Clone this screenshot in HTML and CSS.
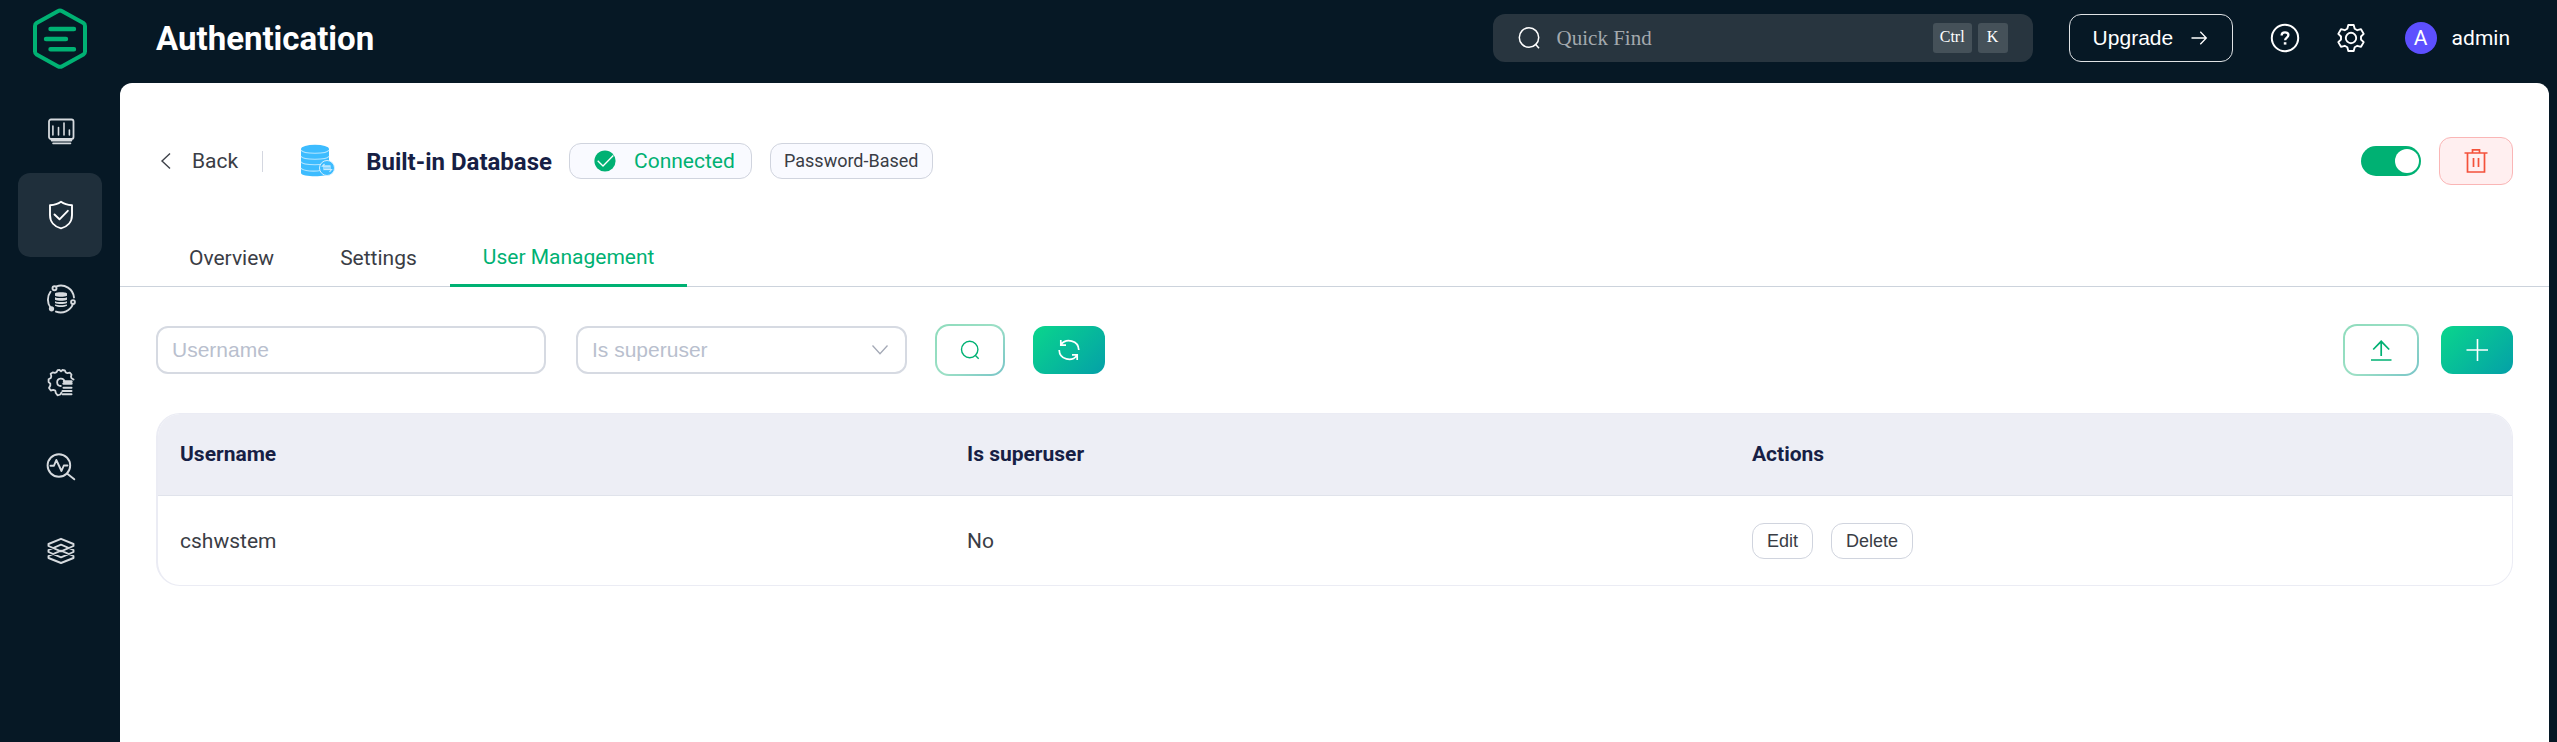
FILE: index.html
```html
<!DOCTYPE html>
<html lang="en">
<head>
<meta charset="utf-8">
<title>Authentication</title>
<link rel="stylesheet" href="styles.css">
</head>
<body>
<div class="app">
  <aside class="sidebar">
    <a class="logo">
      <svg width="56" height="62" viewBox="0 0 56 62" fill="none" stroke="#00b173" stroke-width="4" stroke-linejoin="round" stroke-linecap="round">
        <path d="M25.8 3.2 4.6 15Q3 16 3 18V43.500Q3 45.500 4.600 46.500L25.800 58.200Q28 59.400 30.200 58.200L51.400 46.500Q53 45.500 53 43.500V18Q53 16 51.400 15L30.200 3.200Q28 2 25.800 3.200Z"/>
        <path d="M18.500 21H42M14 31H34M18.500 41.300H42" stroke-width="4.400"/>
      </svg>
    </a>
    <nav class="menu">
      <a class="menu-item">
        <svg width="30" height="30" viewBox="0 0 30 30" fill="none" stroke="#d6dade" stroke-width="1.800" stroke-linecap="round">
          <rect x="3" y="3.500" width="24.500" height="19.500" rx="2"/>
          <path d="M6.900 10V19M12.500 11.500V19M18 7V19M23.400 14V19M5.500 24.600H25.500M7 27.400H24.500" stroke-width="1.600"/>
        </svg>
      </a>
      <a class="menu-item active">
        <svg width="30" height="30" viewBox="0 0 30 30" fill="none" stroke="#fff" stroke-width="1.900" stroke-linejoin="round" stroke-linecap="round">
          <path d="M15 1.800C12 4 8 5 4 5.200V15C4 22 8.500 26.800 15 28.400C21.500 26.800 26 22 26 15V5.200C22 5 18 4 15 1.800Z"/>
          <path d="M8.500 14.500 13.500 19.300 21.800 10.800"/>
        </svg>
      </a>
      <a class="menu-item">
        <svg width="30" height="30" viewBox="0 0 30 30" fill="none" stroke="#d6dade" stroke-width="1.900" stroke-linecap="round">
          <path d="M10.500 2.300A13.200 13.200 0 0 1 28 13.500M27 20A13.200 13.200 0 0 1 10 27.600M4.500 23.500A13.200 13.200 0 0 1 4.500 7.800"/>
          <circle cx="8.500" cy="4.300" r="2"/><circle cx="27" cy="18" r="1.900"/><circle cx="5.500" cy="24.800" r="1.700" fill="#d6dade"/>
          <g fill="#d6dade" stroke="none"><path d="M9 9.500C9 7.800 21 7.800 21 9.500V11.700C18 13 12 13 9 11.700ZM9 13.200C12 14.400 18 14.400 21 13.200V15.700C18 17 12 17 9 15.700ZM9 17.200C12 18.400 18 18.400 21 17.200V19C18 20.300 12 20.300 9 19ZM9 20.400C12 21.500 18 21.500 21 20.400V21.800C18 23.500 12 23.500 9 21.800Z"/></g>
        </svg>
      </a>
      <a class="menu-item">
        <svg width="30" height="30" viewBox="0 0 30 30" fill="none" stroke="#d6dade" stroke-width="1.800" stroke-linejoin="round" stroke-linecap="round">
          <path d="M15.500 24.500 14.300 26.500 11.500 27.300 9.800 25 9.300 22.600 7.300 21.900 4.800 22.500 3 20 4.300 17.500 4.300 15.600 2.600 14 2.600 11.300 4.800 10 5.300 8 4.600 5.800 6.700 4.400 8.800 4.900 10.600 4.200 11.600 2.200 13.500 2 15 3.400 16.500 2 18.800 2.400 19.700 4.400 21.500 5.200 23.800 4.700 25.500 6.500 25 8.800 25.500 10.300 27.600 11.500"/>
          <path d="M14.800 18A3.700 3.700 0 1 1 18.500 13.600"/>
          <path d="M18 13.500H25.500M17.500 15.600H25.500" stroke-width="2.400"/>
          <path d="M17.500 19.700H25.500M16.500 23H25.500M16.500 26.300H25.500" stroke-width="2"/>
        </svg>
      </a>
      <a class="menu-item">
        <svg width="30" height="30" viewBox="0 0 30 30" fill="none" stroke="#d6dade" stroke-width="1.900" stroke-linejoin="round" stroke-linecap="round">
          <circle cx="12.900" cy="13.500" r="11.300"/>
          <path d="M21 21.500 28.300 27.300M4.500 13.700H8L10.300 8 15.500 19 17.800 13.500H21.500" />
        </svg>
      </a>
      <a class="menu-item">
        <svg width="30" height="30" viewBox="0 0 30 30" fill="none" stroke="#d6dade" stroke-width="1.900" stroke-linejoin="round">
          <path d="M15 2.800 27.500 8V10L15 15.400 2.500 10V8ZM15 8.700 27.500 14V16L15 21.300 2.500 16V14ZM15 14.700 27.500 20V22L15 27 2.500 22V20Z"/>
        </svg>
      </a>
    </nav>
  </aside>

  <div class="column">
    <header class="topbar">
      <h1 class="page-name">Authentication</h1>
      <div class="topbar-right">
        <div class="quick-find">
          <svg width="24" height="24" viewBox="0 0 24 24" fill="none" stroke="#fff" stroke-width="1.500"><circle cx="12" cy="11.500" r="9.700"/><path d="M18.300 18 22 22.300"/></svg>
          <span class="quick-find-text">Quick Find</span>
          <kbd class="key">Ctrl</kbd>
          <kbd class="key">K</kbd>
        </div>
        <a class="upgrade">Upgrade
          <svg width="18" height="18" viewBox="0 0 18 18" fill="none" stroke="#fff" stroke-width="1.300"><path d="M1.500 9H16.300M10.300 2.800 16.300 9 10.300 15.200"/></svg>
        </a>
        <svg class="help" width="30" height="30" viewBox="0 0 30 30" fill="none" stroke="#fff" stroke-width="2"><circle cx="15" cy="15" r="13.200"/><path d="M11.600 12.500C11.600 10.200 13 9.300 15 9.300S18.400 10.400 18.400 12.100C18.400 14.500 15.100 14.600 15.100 17.300" stroke-width="2.300"/><path d="M15.100 19.200V21.600" stroke-width="2.600"/></svg>
        <svg class="gear" width="30" height="30" viewBox="0 0 30 30" fill="none" stroke="#fff" stroke-width="1.900" stroke-linejoin="round"><circle cx="15" cy="15" r="5.200"/><path d="M12.300 2H17.700L18.700 5.700 21.300 7.200 25 6.200 27.700 10.900 25 13.500V16.500L27.700 19.100 25 23.800 21.300 22.800 18.700 24.300 17.700 28H12.300L11.300 24.300 8.700 22.800 5 23.800 2.300 19.100 5 16.500V13.500L2.300 10.900 5 6.200 8.700 7.200 11.300 5.700Z"/></svg>
        <span class="avatar">A</span>
        <span class="account">admin</span>
      </div>
    </header>

    <main class="content">
      <section class="detail-head">
        <svg class="back-arrow" width="12" height="18" viewBox="0 0 12 18" fill="none" stroke="#3d4149" stroke-width="1.400"><path d="M10 1.500 2 9 10 16.500"/></svg>
        <span class="back">Back</span>
        <span class="divider"></span>
        <svg class="db-icon" width="36" height="36" viewBox="0 0 36 36">
          <path d="M1 6V30C1 34.300 29 34.300 29 30V6Z" fill="#3dbcff"/>
          <ellipse cx="15" cy="6" rx="14" ry="4.200" fill="#3dbcff"/>
          <path d="M1 7C3 11.300 27 11.300 29 7M1 13.300C3 17.300 27 17.300 29 13.300M1 18.800C3 22.800 27 22.800 29 18.800M1 25C3 28.500 15 28.500 21 27.500" fill="none" stroke="#b4e5ff" stroke-width="1.100"/>
          <circle cx="27" cy="25" r="7.500" fill="#3dbcff" stroke="#d5f0ff" stroke-width="1"/>
          <path d="M23 22.300H31V27.200H23Z" fill="#8fd7ff"/>
          <path d="M24.500 21 22.500 23.200H30M29.500 29 31.500 26.500H24" fill="none" stroke="#c5eaff" stroke-width="1.200"/>
        </svg>
        <h2 class="name">Built-in Database</h2>
        <span class="tag tag-status">
          <svg width="22" height="22" viewBox="0 0 22 22"><circle cx="11" cy="11" r="10.600" fill="#00b173"/><path d="M3.700 10.700 9 16 19.300 5.500" fill="none" stroke="#fff" stroke-width="1.300"/></svg>
          Connected
        </span>
        <span class="tag">Password-Based</span>
        <span class="switch"><span class="knob"></span></span>
        <a class="btn btn-danger">
          <svg width="24" height="26" viewBox="0 0 24 26" fill="none" stroke="#f4523b" stroke-width="1.700"><path d="M0.500 5H23.500M3.500 5V24H20.500V5M8.500 5V1.800H15.500V5M9.500 10V19M14.500 10V19"/></svg>
        </a>
      </section>

      <nav class="tabs">
        <a class="tab">Overview</a>
        <a class="tab">Settings</a>
        <a class="tab current">User Management</a>
      </nav>

      <section class="toolbar">
        <div class="field">Username</div>
        <div class="field select">Is superuser
          <svg width="18" height="12" viewBox="0 0 18 12" fill="none" stroke="#a4a9b6" stroke-width="1.300"><path d="M1.500 1.500 9 9.700 16.500 1.500"/></svg>
        </div>
        <a class="btn btn-outline btn-search">
          <svg width="20" height="20" viewBox="0 0 20 20" fill="none" stroke="#00b173" stroke-width="1.400"><circle cx="9.700" cy="9.500" r="8.200"/><path d="M15.200 15.200 18.700 18.800"/></svg>
        </a>
        <a class="btn btn-fill">
          <svg width="22" height="22" viewBox="0 0 22 22" fill="none" stroke="#fff" stroke-width="1.700"><path d="M3 5.500C8-1 20.500 1 20.800 11M19 16.500C14 23 1.500 21 1.200 11M2.800 1V6.200H8M19.200 21V15.800H14"/></svg>
        </a>
        <span class="spacer"></span>
        <a class="btn btn-outline btn-import">
          <svg width="22" height="24" viewBox="0 0 22 24" fill="none" stroke="#00b173" stroke-width="1.700"><path d="M1 22H21.500M11.200 18V3.300M3.200 11.500 11.200 3.300 19.200 11.500"/></svg>
        </a>
        <a class="btn btn-fill">
          <svg width="22" height="22" viewBox="0 0 22 22" fill="none" stroke="#fff" stroke-width="1.600"><path d="M11.500 0V22M0.500 11H22"/></svg>
        </a>
      </section>

      <section class="table">
        <div class="row row-head">
          <div>Username</div><div>Is superuser</div><div>Actions</div>
        </div>
        <div class="row">
          <div>cshwstem</div><div>No</div>
          <div class="actions"><a class="mini">Edit</a><a class="mini">Delete</a></div>
        </div>
      </section>
    </main>
  </div>
</div>
</body>
</html>
```
FILE: styles.css
```css
* { box-sizing: border-box; }

body {
  margin: 0;
  background: #061825;
  color: #3a3d45;
  font: 21px/30px Roboto, sans-serif;
}

svg { display: block; flex: none; }

.app { display: flex; width: 2557px; height: 742px; overflow: hidden; }

.sidebar { width: 120px; flex: none; }
.logo { display: flex; height: 89px; padding: 8px 0 0 32px; }
.menu-item {
  display: flex;
  align-items: center;
  justify-content: center;
  width: 84px;
  height: 84px;
  margin-left: 18px;
  padding-left: 2px;
  border-radius: 12px;
}
.menu-item.active { background: #1f2f3b; }

.column { flex: 1; min-width: 0; display: flex; flex-direction: column; padding-right: 8px; }

.topbar {
  display: flex;
  align-items: center;
  justify-content: space-between;
  height: 83px;
  padding: 0 39px 7px 36px;
  color: #fff;
}
.page-name { margin: 0; padding-top: 2px; font-size: 33px; font-weight: 700; line-height: 40px; }
.topbar-right { display: flex; align-items: center; }

.quick-find {
  display: flex;
  align-items: center;
  width: 540px;
  height: 48px;
  padding: 0 25px 0 24px;
  border-radius: 12px;
  background: #28353f;
  font-family: "Liberation Serif", serif;
}
.quick-find-text { flex: 1; margin-left: 16px; color: #a3a9ae; }
.key {
  height: 30px;
  min-width: 30px;
  padding: 0 7px;
  margin-left: 6px;
  border-radius: 3px;
  background: #455159;
  font: 16px/28px "Liberation Serif", serif;
  text-align: center;
}

.upgrade {
  display: flex;
  align-items: center;
  gap: 17px;
  width: 164px;
  height: 48px;
  margin-left: 36px;
  padding-left: 23px;
  border: 1px solid #dfe2e5;
  border-radius: 12px;
  font-family: "Liberation Sans", sans-serif;
}
.help { margin-left: 37px; }
.gear { margin-left: 36px; }
.avatar {
  width: 32px;
  height: 32px;
  margin-left: 39px;
  border-radius: 50%;
  background: #5d4fff;
  line-height: 32px;
  text-align: center;
}
.account { margin-left: 15px; }

.content { flex: 1; background: #fff; border-radius: 12px 12px 0 0; }

.detail-head {
  display: flex;
  align-items: center;
  height: 156px;
  padding: 0 36px 0 40px;
}
.back { margin-left: 20px; }
.divider { width: 1px; height: 21px; margin-left: 24px; background: #d4d7e0; }
.db-icon { margin-left: 37px; }
.name { margin: 0 17px 0 30px; padding-top: 2px; color: #171f45; font-size: 24px; font-weight: 700; }
.tag {
  display: flex;
  align-items: center;
  height: 36px;
  margin-right: 18px;
  padding: 0 13px;
  border: 1px solid #d0d4de;
  border-radius: 12px;
  background: #f9faff;
  font-size: 18px;
}
.tag-status { width: 183px; padding-left: 24px; gap: 18px; color: #00b173; font-size: 21px; }
.switch {
  display: flex;
  justify-content: flex-end;
  width: 60px;
  height: 30px;
  margin-left: auto;
  padding: 3px 2px;
  border-radius: 15px;
  background: #00b173;
}
.knob { width: 24px; height: 24px; border-radius: 50%; background: #fff; }

.btn {
  display: flex;
  align-items: center;
  justify-content: center;
  width: 72px;
  height: 48px;
  border-radius: 12px;
}
.btn-danger { width: 74px; margin-left: 18px; background: #ffeff0; border: 1px solid #fab6b6; }
.btn-fill { background: linear-gradient(135deg, #0ad68c, #04a0a8); }
.btn-outline {
  height: 52px;
  border: 2px solid transparent;
  border-radius: 14px;
  background:
    linear-gradient(#fff, #fff) padding-box,
    linear-gradient(135deg, #8edcbc, #9bdfc5 50%, #78c5c8) border-box;
}

.tabs { display: flex; height: 48px; padding-left: 36px; border-bottom: 1px solid #ccd3dc; }
.tab { height: 48px; padding: 4px 33px 0; }
.tab.current { padding-top: 3px; color: #00b173; border-bottom: 3px solid #00b173; }

.toolbar { display: flex; align-items: center; height: 126px; padding: 0 36px; }
.field {
  display: flex;
  align-items: center;
  justify-content: space-between;
  width: 390px;
  height: 48px;
  padding: 0 14px;
  border: 2px solid #d6dae2;
  border-radius: 12px;
  color: #b9bfce;
  font-family: "Liberation Sans", sans-serif;
}
.select { width: 331px; margin-left: 30px; padding: 0 16px 0 14px; }
.btn-search { width: 70px; margin: 0 28px; }
.spacer { flex: 1; }
.btn-import { width: 76px; margin-right: 22px; }

.table {
  margin: 0 36px;
  overflow: hidden;
  border: 1px solid #ebecf4;
  border-left-width: 2px;
  border-radius: 24px;
}
.row {
  display: grid;
  grid-template-columns: 787px 785px 1fr;
  align-items: center;
  height: 89px;
  padding-left: 22px;
}
.row-head {
  height: 82px;
  padding-bottom: 1px;
  background: #edeef5;
  border-bottom: 1px solid #e0e3eb;
  color: #171f45;
  font-weight: 700;
}
.actions { display: flex; gap: 18px; }
.mini {
  height: 36px;
  padding: 0 14px;
  border: 1px solid #d0d4de;
  border-radius: 12px;
  font: 18px/34px "Liberation Sans", sans-serif;
}
```
